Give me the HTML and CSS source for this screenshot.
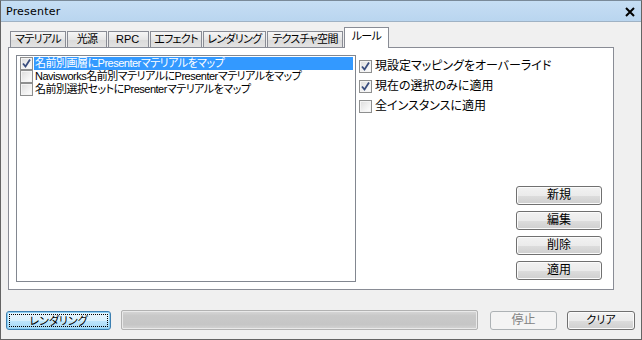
FILE: index.html
```html
<!DOCTYPE html>
<html lang="ja">
<head>
    <meta charset="UTF-8">
    <title>Presenter</title>
    <link rel="stylesheet" href="styles.css">
</head>
<body>
    <div class="window">
        <div class="titlebar">
            <span class="title">Presenter</span>
            <svg class="close" width="10" height="10" viewBox="0 0 10 10">
                <path d="M1 1 L9 9 M9 1 L1 9" stroke="#000" stroke-width="2"/>
            </svg>
        </div>

        <div class="body">
            <div class="tabs">
                <div class="tab tab-material">マテリアル</div>
                <div class="tab tab-light">光源</div>
                <div class="tab tab-rpc">RPC</div>
                <div class="tab tab-effect">エフェクト</div>
                <div class="tab tab-render">レンダリング</div>
                <div class="tab tab-texture">テクスチャ空間</div>
                <div class="tab active">ルール</div>
            </div>

            <div class="panel">
                <div class="list">
                    <div class="item selected">
                        <span class="cb checked"></span>
                        <span class="item-label">名前別画層にPresenterマテリアルをマップ</span>
                    </div>
                    <div class="item">
                        <span class="cb"></span>
                        <span class="item-label">Navisworks名前別マテリアルにPresenterマテリアルをマップ</span>
                    </div>
                    <div class="item">
                        <span class="cb"></span>
                        <span class="item-label">名前別選択セットにPresenterマテリアルをマップ</span>
                    </div>
                </div>

                <div class="side">
                    <div class="options">
                        <label class="option"><span class="cb checked"></span>現設定マッピングをオーバーライド</label>
                        <label class="option"><span class="cb checked"></span>現在の選択のみに適用</label>
                        <label class="option"><span class="cb"></span>全インスタンスに適用</label>
                    </div>
                    <div class="actions">
                        <button class="btn">新規</button>
                        <button class="btn">編集</button>
                        <button class="btn">削除</button>
                        <button class="btn">適用</button>
                    </div>
                </div>
            </div>
        </div>

        <div class="footer">
            <button class="btn btn-render"><span class="focus">レンダリング</span></button>
            <div class="progress"></div>
            <button class="btn btn-stop" disabled>停止</button>
            <button class="btn btn-clear">クリア</button>
        </div>
    </div>
</body>
</html>
```

FILE: styles.css
```css
* {
    box-sizing: border-box;
}
body {
    margin: 0;
    font-family: "Liberation Sans", "Noto Sans CJK JP", sans-serif;
    font-size: 11px;
    font-feature-settings: "palt";
    color: #000;
    background: #fff;
}
.window {
    width: 642px;
    height: 340px;
    border: 1px solid #646464;
    border-top-color: #7a8a99;
    background: #f0f0f0;
    display: flex;
    flex-direction: column;
}
.titlebar {
    height: 21px;
    background: linear-gradient(#c6def4, #b9d5ef);
    border-bottom: 1px solid #9fb2c4;
    display: flex;
    align-items: center;
    justify-content: space-between;
    padding: 0 6px 0 5px;
}
.title {
    font-family: "DejaVu Sans", sans-serif;
    font-size: 11px;
    letter-spacing: 0.2px;
}
.close {
    margin-top: 1px;
}
.body {
    padding: 5px 0 0 7px;
}
.tabs {
    display: flex;
    align-items: flex-end;
    height: 20px;
    padding-left: 2px;
    position: relative;
    z-index: 1;
}
.tab {
    height: 16px;
    line-height: 15px;
    padding: 0;
    margin-right: 1px;
    border: 1px solid #898c95;
    border-bottom: none;
    background: linear-gradient(#f6f6f6, #e6e6e6 50%, #dadada 51%, #e3e3e3);
    white-space: nowrap;
    text-align: center;
    letter-spacing: -0.7px;
}
.tab-material { width: 56px; }
.tab-light { width: 40px; }
.tab-rpc { width: 41px; letter-spacing: 0; text-align: left; padding-left: 7px; }
.tab-effect { width: 52px; }
.tab-render { width: 63px; }
.tab-texture { width: 76px; }
.tab.active {
    width: 45px;
    height: 21px;
    line-height: 17px;
    margin-bottom: -1px;
    background: #fff;
}
.panel {
    width: 606px;
    height: 243px;
    border: 1px solid #898c95;
    background: #fff;
    display: flex;
    padding: 7px;
}
.list {
    width: 340px;
    border: 1px solid #828790;
    padding: 1px 2px 0 3px;
}
.item {
    display: flex;
    height: 13px;
    line-height: 13px;
}
.item-label {
    flex: 1;
    padding-left: 1px;
    margin-left: 1px;
    white-space: nowrap;
    letter-spacing: -0.5px;
}
.item.selected .item-label {
    background: #3399ff;
    color: #fff;
}
.cb {
    display: inline-block;
    flex: none;
    width: 13px;
    height: 13px;
    border: 1px solid #8e8f8f;
    background: linear-gradient(135deg, #dcdcdc, #f6f6f6 70%, #fff);
    box-shadow: inset 0 0 0 1px #f4f4f4;
}
.cb.checked {
    background-color: #f2f2f2;
    background-image: url("data:image/svg+xml;utf8,<svg xmlns='http://www.w3.org/2000/svg' width='11' height='11'><path d='M2 5.5 L4.5 8.5 L9 1.5' fill='none' stroke='%23394d7e' stroke-width='1.8'/></svg>"), linear-gradient(135deg, #dcdcdc, #f6f6f6 70%, #fff);
    background-repeat: no-repeat;
}
.side {
    flex: 1;
    display: flex;
    flex-direction: column;
    padding: 5px 4px 2px 3px;
}
.options {
    display: flex;
    flex-direction: column;
    gap: 7px;
}
.option {
    display: flex;
    align-items: center;
    gap: 3px;
    height: 13px;
    line-height: 13px;
    font-size: 12px;
    white-space: nowrap;
}
.actions {
    margin-top: auto;
    display: flex;
    flex-direction: column;
    align-items: flex-end;
    gap: 6px;
}
.btn {
    font: inherit;
    width: 86px;
    height: 19px;
    padding: 0;
    border: 1px solid #707070;
    border-radius: 3px;
    background: linear-gradient(#f2f2f2, #ebebeb 50%, #dddddd 51%, #cfcfcf);
    box-shadow: inset 0 0 0 1px #fbfbfb;
    color: #000;
    line-height: 15px;
    font-size: 12px;
}
.footer {
    display: flex;
    align-items: center;
    margin-top: 20px;
    padding: 0 6px 0 5px;
}
.btn-render {
    width: 105px;
    border-color: #3c7fb1;
    background: linear-gradient(#eaf6fd, #d9f0fc 50%, #bee6fd 51%, #a7d9f5);
    box-shadow: inset 0 0 0 1px #8dd1f5;
    padding: 2px;
    font-size: 11px;
}
.focus {
    display: block;
    height: 100%;
    border: 1px dotted #000;
    line-height: 12px;
}
.progress {
    flex: 1;
    height: 20px;
    margin: 0 12px 0 10px;
    border: 1px solid #b2b2b2;
    border-radius: 2px;
    background: linear-gradient(#d8d8d8, #c9c9c9 25%, #c6c6c6 75%, #d4d4d4);
    box-shadow: inset 0 0 0 1px #e9e9e9;
}
.btn-stop {
    width: 67px;
    border-color: #adb2b5;
    background: #f4f4f4;
    box-shadow: none;
    color: #838383;
    margin-right: 10px;
}
.btn-clear {
    width: 68px;
    font-size: 11px;
}
```
